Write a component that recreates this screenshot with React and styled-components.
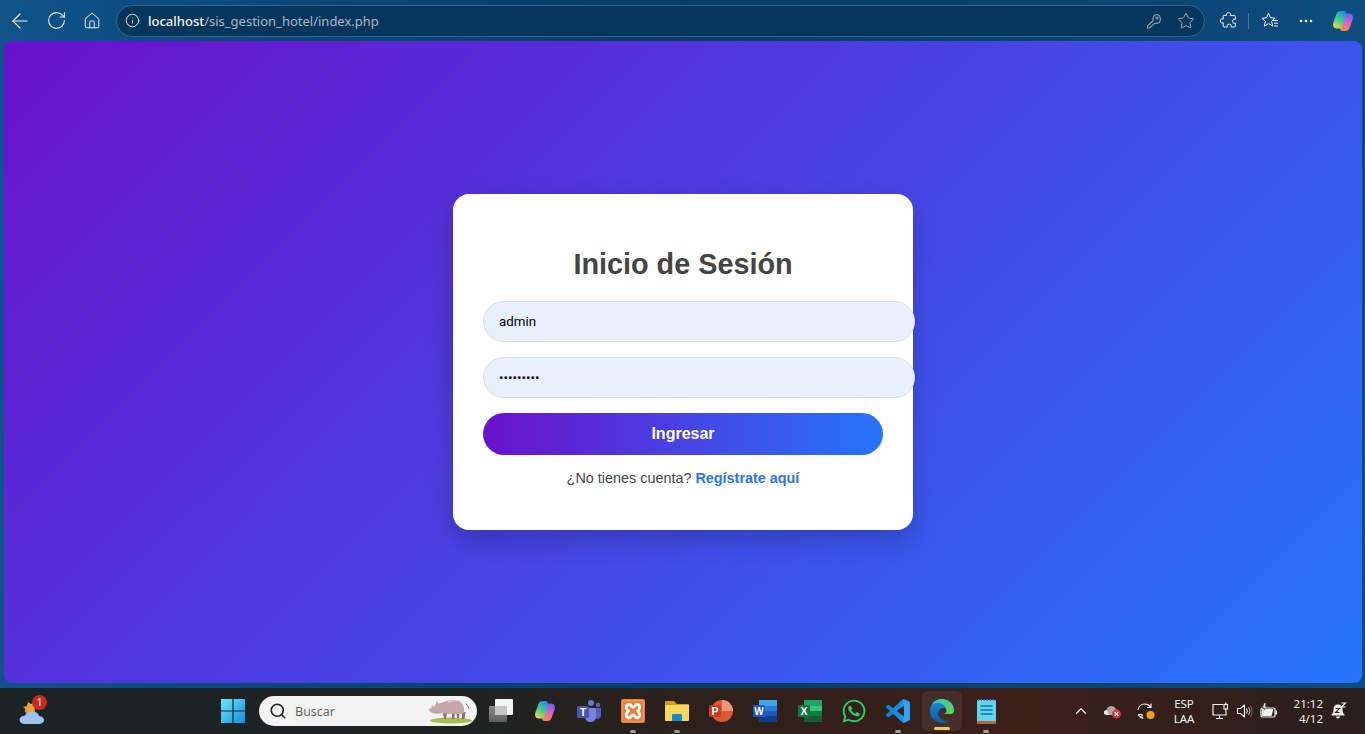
import React from "react";
import styled, { createGlobalStyle } from "styled-components";
import { ArrowLeft, RotateCw, House, Info, Star, ChevronUp, Search } from "lucide-react";
import { FaWhatsapp } from "react-icons/fa";

const GlobalStyle = createGlobalStyle`
  html, body {
    margin: 0;
    height: 100%;
    overflow: hidden;
  }
  * {
    box-sizing: content-box;
  }
`;

const Screen = styled.div`
  height: 734px;
  display: flex;
  flex-direction: column;
  background: linear-gradient(90deg, #0f5389 0%, #0a4676 25%, #063c68 50%, #0a4471 80%, #0d4d80 100%);
  font-family: "Liberation Sans", Arial, sans-serif;
`;

const Toolbar = styled.div`
  height: 41px;
  flex: none;
  display: flex;
  align-items: center;
  padding-left: 2px;
`;

const ToolButton = styled.div`
  width: ${(p) => p.$w || 36}px;
  height: 32px;
  flex: none;
  display: flex;
  align-items: center;
  justify-content: center;
  color: ${(p) => p.$color || "#eef4f8"};
`;

const AddressBar = styled.div`
  flex: none;
  width: 1085px;
  height: 30px;
  margin-left: 6px;
  margin-right: 5px;
  padding-right: 2px;
  display: flex;
  align-items: center;
  border: 1px solid #2f6690;
  border-radius: 16px;
  background: #07365c;
  color: #e8eef3;
`;

const SiteInfo = styled.div`
  width: 31px;
  flex: none;
  display: flex;
  justify-content: center;
`;

const Url = styled.div`
  flex: 1;
  font-family: "Noto Sans", sans-serif;
  font-size: 13px;
  color: #a7b9c8;
  white-space: nowrap;
`;

const Host = styled.span`
  color: #f4f7fa;
  font-weight: 500;
`;

const Divider = styled.div`
  width: 1px;
  height: 16px;
  flex: none;
  background: #4a7698;
`;

const PageFrame = styled.div`
  flex: none;
  padding: 0 3px 5px 4px;
`;

const Page = styled.main`
  height: 642px;
  border-radius: 8px;
  display: flex;
  align-items: center;
  justify-content: center;
  background: linear-gradient(135deg, #6a11cb, #2575fc);
`;

const Card = styled.div`
  width: 400px;
  padding: 50px 30px 44px;
  background: #fff;
  border-radius: 16px;
  box-shadow: 0 10px 25px rgba(0, 0, 0, 0.2);
`;

const Title = styled.h2`
  margin: 0 0 17px;
  font-size: 28.8px;
  line-height: 40px;
  font-weight: 700;
  text-align: center;
  color: #444;
`;

const Input = styled.input`
  display: block;
  width: 100%;
  height: 15px;
  padding: 12px 15px;
  margin: 0 0 15px;
  border: 1px solid #ddd;
  border-radius: 25px;
  outline: none;
  background: #e8f0fe;
  font-family: Roboto, sans-serif;
  font-size: 13.33px;
  color: #000;
`;

const SubmitButton = styled.button`
  display: block;
  width: 100%;
  height: 42px;
  padding: 0;
  border: none;
  border-radius: 25px;
  background: linear-gradient(90deg, #6a11cb, #2575fc);
  font-family: "Liberation Sans", Arial, sans-serif;
  font-size: 16px;
  font-weight: 700;
  color: #fff;
`;

const Footnote = styled.p`
  margin: 15px 0 0;
  font-size: 14.4px;
  line-height: 16px;
  text-align: center;
  color: #444;
`;

const RegisterLink = styled.a`
  font-weight: 700;
  color: #2d74e8;
  text-decoration: none;
`;

const Taskbar = styled.footer`
  height: 46px;
  flex: none;
  display: flex;
  align-items: center;
  background: linear-gradient(90deg, #1c2423 0%, #1e2322 35%, #30201a 55%, #3b2018 75%, #2f1f1a 92%, #291f1c 100%);
`;

const WeatherSlot = styled.div`
  width: 211px;
  flex: none;
  padding-left: 16px;
  box-sizing: border-box;
  display: flex;
  align-items: center;
`;

const Weather = styled.div`
  position: relative;
  width: 32px;
  height: 32px;
`;

const Badge = styled.span`
  position: absolute;
  top: 0;
  right: 1px;
  width: 15px;
  height: 15px;
  border-radius: 50%;
  background: #c42b1c;
  color: #fff;
  font-family: "Noto Sans", sans-serif;
  font-size: 10px;
  line-height: 15px;
  text-align: center;
`;

const TaskSlot = styled.div`
  position: relative;
  width: ${(p) => (p.$narrow ? 40 : 44)}px;
  height: ${(p) => (p.$narrow ? 40 : 44)}px;
  margin-left: ${(p) => (p.$narrow ? 2 : p.$nudge || 0)}px;
  margin-right: ${(p) => (p.$narrow ? 2 : 0)}px;
  flex: none;
  display: flex;
  align-items: center;
  justify-content: center;
  border-radius: 6px;
  background: ${(p) => (p.$active ? "rgba(255, 255, 255, 0.07)" : "none")};
`;

const RunDot = styled.span`
  position: absolute;
  left: 50%;
  bottom: ${(p) => (p.$active ? 1 : 0)}px;
  width: ${(p) => (p.$active ? 16 : 6)}px;
  height: 3px;
  border-radius: 2px;
  transform: translateX(-50%);
  background: ${(p) => (p.$active ? "#e6c76c" : "#9c9c9c")};
`;

const SearchBox = styled.div`
  width: 218px;
  height: 30px;
  margin: 0 2px 0 4px;
  padding: 0 3px 0 10px;
  box-sizing: border-box;
  flex: none;
  display: flex;
  align-items: center;
  gap: 8px;
  border-radius: 15px;
  background: #f3f3f3;
  color: #222;
`;

const SearchText = styled.span`
  flex: 1;
  font-family: "Noto Sans", sans-serif;
  font-size: 12.5px;
  color: #666;
`;

const Tray = styled.div`
  margin-left: auto;
  padding-right: 14px;
  display: flex;
  align-items: center;
  color: #f2f0ee;
`;

const TraySlot = styled.div`
  width: ${(p) => p.$w}px;
  margin-left: ${(p) => p.$gap || 0}px;
  flex: none;
  display: flex;
  align-items: center;
  justify-content: center;
`;

const TrayText = styled.div`
  width: ${(p) => p.$w}px;
  flex: none;
  font-family: "Noto Sans", sans-serif;
  font-size: 11.5px;
  line-height: 15.5px;
  text-align: ${(p) => p.$align || "center"};
  color: #f2f0ee;
`;

const CopilotIcon = ({ size, id }) => (
  <svg width={size} height={size} viewBox="0 0 24 24">
    <defs>
      <linearGradient id={`${id}-a`} x1="0.7" y1="0" x2="0.2" y2="1">
        <stop offset="0" stopColor="#1e8fe8" />
        <stop offset="0.5" stopColor="#3fd08a" />
        <stop offset="1" stopColor="#f7d43c" />
      </linearGradient>
      <linearGradient id={`${id}-b`} x1="0.6" y1="0" x2="0.4" y2="1">
        <stop offset="0" stopColor="#6f5cf0" />
        <stop offset="0.55" stopColor="#e85fc4" />
        <stop offset="1" stopColor="#f98a3a" />
      </linearGradient>
    </defs>
    <path d="M14.500 22c2 0 3.300-1 4-3l3.100-8.500c1.100-3.200-.4-6-3.200-6h-2.600c-1.800 0-2.800 1-3.400 2.700L9 18c-.6 2 .4 4 2.600 4z" fill={`url(#${id}-b)`} />
    <path d="M9.500 2C7.500 2 6.200 3 5.500 5L2.400 13.500c-1.100 3.200.4 6 3.200 6h2.600c1.800 0 2.800-1 3.400-2.700L15 6c.6-2-.4-4-2.600-4z" fill={`url(#${id}-a)`} />
  </svg>
);

const KeyIcon = () => (
  <svg width="16" height="16" viewBox="0 0 16 16" fill="none" stroke="#8aa3b7" strokeWidth="1.100" strokeLinejoin="round">
    <path d="M10 1.500a4.500 4.500 0 0 1 1.500 8.700c-1 .3-1.800.2-2.500-.1L3.300 15H1.500v-2l5.700-5.500c-.4-1-.4-2 .1-3A4.500 4.500 0 0 1 10 1.500z" />
    <circle cx="11" cy="5" r="1" />
  </svg>
);

const PuzzleIcon = () => (
  <svg width="20" height="20" viewBox="0 0 20 20" fill="none" stroke="#eef4f8" strokeWidth="1" strokeLinejoin="round">
    <path d="M7.500 3.200c0-2 4.200-2 4.200 0 0 .6-.3 1-.3 1.400h4.200a.8.8 0 0 1 .8.800v3c-.5 0-.9-.3-1.500-.3-1.800 0-1.800 4.200 0 4.200.6 0 1-.3 1.500-.3v3.200a.8.8 0 0 1-.8.800h-3.600c0-.5.3-.9.3-1.400 0-1.900-4.200-1.900-4.200 0 0 .5.3.9.3 1.400H5a.8.8 0 0 1-.8-.8v-3.500c-.5 0-.9.3-1.400.3-1.900 0-1.900-4.200 0-4.200.5 0 .9.3 1.400.3v-3a.8.8 0 0 1 .8-.8h3c0-.4-.5-.8-.5-1.400z" />
  </svg>
);

const FavoritesIcon = () => (
  <svg width="20" height="20" viewBox="0 0 20 20" fill="none" stroke="#eef4f8" strokeWidth="1" strokeLinejoin="round">
    <path d="M8.500 2.200l2 4.600 4.600.4-3.500 3.100 1 4.800-4.100-2.500-4.200 2.500 1.100-4.800L2 7.200l4.600-.4z" />
    <path d="M13 9.500h5M14 12.200h4M14 15h4" />
  </svg>
);

const DotsIcon = () => (
  <svg width="14" height="4" viewBox="0 0 14 4" fill="#eef4f8">
    <circle cx="2" cy="2" r="1.300" />
    <circle cx="7" cy="2" r="1.300" />
    <circle cx="12" cy="2" r="1.300" />
  </svg>
);

const WeatherIcon = () => (
  <svg width="32" height="32" viewBox="0 0 32 32">
    <path d="M9 17l1-3-3-2 4-1 1-4 3 2 3-1-1 10z" fill="#f2a93b" />
    <circle cx="14" cy="15" r="5" fill="#e8a23a" />
    <path d="M9 29c-3.500 0-5.500-1.800-5.500-4.200S6 20.500 8.800 20.800C10 18 12.800 16.500 16 16.500c3.800 0 6.600 2 7.200 4.700 2.500-.3 4.800 1.300 4.800 3.600S26 29 23.500 29z" fill="#9ec3ee" />
  </svg>
);

const WindowsIcon = () => (
  <svg width="24" height="24" viewBox="0 0 24 24">
    <defs>
      <linearGradient id="win" x1="0" y1="0" x2="1" y2="1">
        <stop offset="0" stopColor="#6fe3fb" />
        <stop offset="1" stopColor="#0f8fe6" />
      </linearGradient>
    </defs>
    <path d="M0 0h11.400v11.400H0zM12.600 0H24v11.400H12.600zM0 12.600h11.400V24H0zM12.600 12.600H24V24H12.600z" fill="url(#win)" />
  </svg>
);

const RhinoIcon = () => (
  <svg width="46" height="26" viewBox="0 0 46 26">
    <ellipse cx="23" cy="22.500" rx="21" ry="3" fill="#a9bb56" />
    <path d="M24 21h2l1-6h-3zM34 21h2.500l1-7h-4zM16 21h2l1-6h-4zM29 20h2l.5-5h-3z" fill="#8b7273" />
    <path d="M1 11l2.500-1 .5-3 1.500 2 2.500-3 .5-3 2 2.500c3-.5 5-1.500 8-2.500 5-1.500 11-1.500 14 1 3 2.500 4 6 3.500 10l-1 2H18l-4-1c-3 1-6.500 1-9.500 0C2.500 14.500 1 13 1 11z" fill="#c4a6a6" />
    <path d="M20 3c4.500-1.500 10-1.500 13.500.500-4-.5-9-.5-13.500 1.500z" fill="#e0cdcb" />
    <path d="M38 6c1.500 1 2.500 3 3 5" stroke="#6b5a55" strokeWidth="0.800" fill="none" />
  </svg>
);

const TaskViewIcon = () => (
  <svg width="24" height="24" viewBox="0 0 24 24">
    <defs>
      <linearGradient id="task-view" x1="0" y1="0" x2="0" y2="1">
        <stop offset="0" stopColor="#8a8a8a" />
        <stop offset="1" stopColor="#5e5e5e" />
      </linearGradient>
    </defs>
    <rect x="6" y="0" width="18" height="16" rx="1" fill="#f4f4f4" />
    <rect x="0" y="7" width="18" height="16" rx="1" fill="url(#task-view)" />
    <rect x="6" y="7" width="12" height="9" fill="#c4c4c4" />
  </svg>
);

const TeamsIcon = () => (
  <svg width="24" height="24" viewBox="0 0 24 24">
    <circle cx="14" cy="4" r="3" fill="#6f73c8" />
    <circle cx="21" cy="6" r="2.300" fill="#5a5fb5" />
    <path d="M16 9h8v7c0 2.500-2 4-4 4s-4-1.500-4-4z" fill="#5a5fb5" />
    <path d="M8 9h11v9c0 3-2.500 5-5.500 5S8 21 8 18z" fill="#7b80d8" />
    <rect x="0" y="7" width="12" height="12" rx="1.500" fill="#4d52ac" />
    <text x="6" y="16.500" fontFamily="Liberation Sans, sans-serif" fontSize="10" fontWeight="700" fill="#fff" textAnchor="middle">T</text>
  </svg>
);

const XamppIcon = () => (
  <svg width="24" height="24" viewBox="0 0 24 24">
    <rect width="24" height="24" rx="2" fill="#e8803a" />
    <rect x="1.500" y="1.500" width="21" height="21" rx="1" fill="none" stroke="#f3a56d" strokeWidth="0.800" />
    <path d="M7 5.500c2.500-1.500 3 2.500 5 2.500s2.500-4 5-2.500c3 1.500 1.500 5-.5 6.500 2 1.500 3.500 5 .5 6.500-2.500 1.500-3-2.500-5-2.500s-2.500 4-5 2.500c-3-1.500-1.500-5 .5-6.500C5.500 10.500 4 7 7 5.500z" fill="none" stroke="#fff" strokeWidth="2.800" strokeLinejoin="round" />
  </svg>
);

const FolderIcon = () => (
  <svg width="24" height="24" viewBox="0 0 24 24">
    <path d="M0 3a1 1 0 0 1 1-1h8l3 3h11a1 1 0 0 1 1 1v4H0z" fill="#d69c14" />
    <path d="M0 6h24v15a1 1 0 0 1-1 1H1a1 1 0 0 1-1-1z" fill="#fbd75f" />
    <path d="M7 16a1 1 0 0 1 1-1h8a1 1 0 0 1 1 1v6H7z" fill="#1b86c8" />
  </svg>
);

const PowerpointIcon = () => (
  <svg width="24" height="24" viewBox="0 0 24 24">
    <circle cx="13" cy="12" r="11" fill="#dd5a36" />
    <path d="M13 1a11 11 0 0 1 11 11H13z" fill="#f0937a" />
    <rect x="0" y="6" width="12" height="12" rx="1.500" fill="#c23b1e" />
    <text x="6" y="15.800" fontFamily="Liberation Sans, sans-serif" fontSize="10.500" fontWeight="700" fill="#fff" textAnchor="middle">P</text>
  </svg>
);

const WordIcon = () => (
  <svg width="24" height="24" viewBox="0 0 24 24">
    <rect x="6" y="1" width="18" height="6" fill="#41a5ee" />
    <rect x="6" y="7" width="18" height="5" fill="#2b7cd3" />
    <rect x="6" y="12" width="18" height="5" fill="#185abd" />
    <rect x="6" y="17" width="18" height="6" fill="#103f91" />
    <rect x="0" y="6" width="12" height="12" rx="1" fill="#1b5bb8" />
    <text x="6" y="15.800" fontFamily="Liberation Sans, sans-serif" fontSize="10" fontWeight="700" fill="#fff" textAnchor="middle">W</text>
  </svg>
);

const ExcelIcon = () => (
  <svg width="24" height="24" viewBox="0 0 24 24">
    <rect x="6" y="1" width="18" height="6" fill="#21a366" />
    <rect x="6" y="7" width="18" height="5" fill="#33c481" />
    <rect x="6" y="12" width="18" height="5" fill="#107c41" />
    <rect x="6" y="17" width="18" height="6" fill="#185c37" />
    <rect x="0" y="6" width="12" height="12" rx="1" fill="#117544" />
    <text x="6" y="15.800" fontFamily="Liberation Sans, sans-serif" fontSize="10.500" fontWeight="700" fill="#fff" textAnchor="middle">X</text>
  </svg>
);

const VscodeIcon = () => (
  <svg width="24" height="24" viewBox="0 0 24 24">
    <defs>
      <linearGradient id="vscode" x1="0" y1="0" x2="1" y2="0">
        <stop offset="0" stopColor="#0f7fd0" />
        <stop offset="0.7" stopColor="#1a90e4" />
        <stop offset="0.75" stopColor="#2aa6f5" />
        <stop offset="1" stopColor="#2aa6f5" />
      </linearGradient>
    </defs>
    <path d="M23.150 2.587L18.210.21a1.494 1.494 0 0 0-1.705.29l-9.460 8.630-4.120-3.128a.999.999 0 0 0-1.276.057L.327 7.261A1 1 0 0 0 .326 8.740L3.899 12 .326 15.260a1 1 0 0 0 .001 1.479L1.650 17.940a.999.999 0 0 0 1.276.057l4.120-3.128 9.460 8.630a1.492 1.492 0 0 0 1.704.29l4.942-2.377A1.500 1.500 0 0 0 24 20.060V3.939a1.500 1.500 0 0 0-.850-1.352zm-5.146 14.861L10.826 12l7.178-5.448v10.896z" fill="url(#vscode)" />
  </svg>
);

const EdgeIcon = () => (
  <svg width="26" height="26" viewBox="0 0 26 26">
    <defs>
      <linearGradient id="edge-a" x1="0" y1="0" x2="1" y2="1">
        <stop offset="0" stopColor="#30c6c0" />
        <stop offset="1" stopColor="#5fd84f" />
      </linearGradient>
      <linearGradient id="edge-b" x1="0" y1="0" x2="0" y2="1">
        <stop offset="0" stopColor="#1b8ce0" />
        <stop offset="1" stopColor="#0c59a4" />
      </linearGradient>
    </defs>
    <path d="M13 1C6.400 1 1 6.400 1 13c0 6.800 5.500 12 12 12 2.700 0 5.300-.9 7.400-2.500-4.400 1.200-9.400-.6-10.900-4.900-1.200-3.500.9-7 4.500-7.600 3-.5 5 .8 5.600 3H25C25 6 19.600 1 13 1z" fill="url(#edge-b)" />
    <path d="M13 1C8.500 1 4.500 3.500 2.500 7.200 5 4.500 9 4 12.200 5.400c3.200 1.400 5 3.800 5.400 7.600.2 1.500-1.500 3-3.500 3h7c2.300 0 3.900-1.300 3.900-3.600C25 6 19.600 1 13 1z" fill="url(#edge-a)" />
  </svg>
);

const NotepadIcon = () => (
  <svg width="19" height="25" viewBox="0 0 19 25">
    <rect x="0" y="1" width="19" height="23" rx="1" fill="#66d3ec" />
    <path d="M1.500 2V0M4.500 2V0M7.500 2V0M10.500 2V0M13.500 2V0M16.500 2V0" stroke="#1f8fb5" strokeWidth="1.300" />
    <rect x="0" y="22" width="19" height="3" fill="#b5683a" />
    <path d="M3.500 7h12M3.500 11h12M3.500 15h12" stroke="#1a8fb5" strokeWidth="2" />
  </svg>
);

const CloudAlertIcon = () => (
  <svg width="18" height="16" viewBox="0 0 18 16">
    <path d="M3 12c-2 0-3-1-3-2.500S1.500 7 2.500 7C3 4.500 5 3 7.500 3c2.200 0 4 1.500 4.500 3.500 1 0 2 .5 2.500 1.500V12z" fill="#a9a6a4" />
    <path d="M3 12c-2 0-3-1-3-2.500S1.500 7 2.500 7L6 12z" fill="#e9e7e5" />
    <circle cx="12.500" cy="11" r="4.500" fill="#d8343f" />
    <path d="M10.700 9.200l3.600 3.600M14.300 9.200l-3.600 3.600" stroke="#fff" strokeWidth="1.200" />
  </svg>
);

const SyncIcon = () => (
  <svg width="20" height="20" viewBox="0 0 20 20" fill="none" stroke="#f2f0ee" strokeWidth="1.200">
    <path d="M2 9c.3-3.700 3.300-6 6.800-6 2.400 0 4.400 1 5.700 3" />
    <path d="M15 2.500V6.500h-4" />
    <path d="M2 13.500h4v4M2.300 14c1.200 1.800 2.800 3 5 3.300" />
    <circle cx="14.500" cy="14" r="4" fill="#f59c1a" stroke="none" />
  </svg>
);

const MonitorIcon = () => (
  <svg width="18" height="18" viewBox="0 0 18 18" fill="none" stroke="#f2f0ee" strokeWidth="1.200">
    <path d="M11 2.500H1v10.500h13V9" />
    <path d="M7.500 13v3M4 16.500h7" />
    <rect x="12" y="2.500" width="3.500" height="4.500" />
    <path d="M13.800 .5v2M13.800 7v2" />
  </svg>
);

const SpeakerIcon = () => (
  <svg width="18" height="18" viewBox="0 0 18 18" fill="none" stroke="#f2f0ee" strokeWidth="1.100">
    <path d="M1.500 6.500h3L8.500 3v12l-4-3.500h-3z" strokeLinejoin="round" />
    <path d="M10.500 6.500c1 1.500 1 3.500 0 5" />
    <path d="M12.500 5c1.600 2.500 1.600 5.500 0 8" stroke="#b5b0ad" />
    <path d="M14.500 3.500c2 3.300 2 7.700 0 11" stroke="#6e6763" />
  </svg>
);

const BatteryIcon = () => (
  <svg width="18" height="18" viewBox="0 0 18 18">
    <rect x="1" y="6" width="14" height="9" rx="1.500" fill="none" stroke="#f2f0ee" strokeWidth="1.200" />
    <path d="M2 7h11.500l-2 7H2z" fill="#f2f0ee" />
    <rect x="15.500" y="8.500" width="1.500" height="4" fill="#f2f0ee" />
    <path d="M4 1L2.500 6h2.200L3.800 8.500 7.500 4.500H5.200L6.200 1z" fill="#f2f0ee" stroke="#2f201a" strokeWidth="0.500" />
  </svg>
);

const BellIcon = () => (
  <svg width="18" height="18" viewBox="0 0 18 18">
    <path d="M8 2.500c3 0 4.500 2 4.500 4.500 0 3 .5 4 2 5.500v1H1.500v-1c1.500-1.500 2-2.500 2-5.500C3.500 4.500 5 2.500 8 2.500z" fill="#f2f0ee" />
    <path d="M6 14.500c0 2.500 4 2.500 4 0z" fill="#f2f0ee" />
    <path d="M5.500 6.500h4l-4 4h4" fill="none" stroke="#2f201a" strokeWidth="1.100" />
    <path d="M11.500 1h4l-4 4h4" fill="none" stroke="#f2f0ee" strokeWidth="1.100" />
  </svg>
);

const App = () => {
  return (
    <Screen>
      <GlobalStyle />
      <Toolbar>
        <ToolButton><ArrowLeft size={24} strokeWidth={1.1} /></ToolButton>
        <ToolButton><RotateCw size={21} strokeWidth={1.2} /></ToolButton>
        <ToolButton><House size={18} strokeWidth={1.3} /></ToolButton>
        <AddressBar>
          <SiteInfo><Info size={15} strokeWidth={1.5} /></SiteInfo>
          <Url><Host>localhost</Host>/sis_gestion_hotel/index.php</Url>
          <ToolButton $w={32}><KeyIcon /></ToolButton>
          <ToolButton $w={32} $color="#a9bccb"><Star size={18} strokeWidth={1.2} /></ToolButton>
        </AddressBar>
        <ToolButton $w={38}><PuzzleIcon /></ToolButton>
        <Divider />
        <ToolButton $w={42}><FavoritesIcon /></ToolButton>
        <ToolButton $w={30}><DotsIcon /></ToolButton>
        <ToolButton $w={44}><CopilotIcon size={24} id="copilot-top" /></ToolButton>
      </Toolbar>

      <PageFrame>
        <Page>
          <Card>
            <Title>Inicio de Sesión</Title>
            <form>
              <Input type="text" defaultValue="admin" />
              <Input type="password" defaultValue="123456789" />
              <SubmitButton type="button">Ingresar</SubmitButton>
            </form>
            <Footnote>
              ¿No tienes cuenta? <RegisterLink href="#">Regístrate aquí</RegisterLink>
            </Footnote>
          </Card>
        </Page>
      </PageFrame>

      <Taskbar>
        <WeatherSlot>
          <Weather>
            <WeatherIcon />
            <Badge>1</Badge>
          </Weather>
        </WeatherSlot>
        <TaskSlot><WindowsIcon /></TaskSlot>
        <SearchBox>
          <Search size={18} strokeWidth={2.2} />
          <SearchText>Buscar</SearchText>
          <RhinoIcon />
        </SearchBox>
        <TaskSlot><TaskViewIcon /></TaskSlot>
        <TaskSlot><CopilotIcon size={24} id="copilot-bar" /></TaskSlot>
        <TaskSlot><TeamsIcon /></TaskSlot>
        <TaskSlot><XamppIcon /><RunDot /></TaskSlot>
        <TaskSlot><FolderIcon /><RunDot /></TaskSlot>
        <TaskSlot><PowerpointIcon /></TaskSlot>
        <TaskSlot><WordIcon /></TaskSlot>
        <TaskSlot $nudge={1}><ExcelIcon /></TaskSlot>
        <TaskSlot><FaWhatsapp size={26} color="#25d366" /></TaskSlot>
        <TaskSlot><VscodeIcon /><RunDot /></TaskSlot>
        <TaskSlot $narrow $active><EdgeIcon /><RunDot $active /></TaskSlot>
        <TaskSlot><NotepadIcon /><RunDot /></TaskSlot>
        <Tray>
          <TraySlot $w={32}><ChevronUp size={18} strokeWidth={1.6} /></TraySlot>
          <TraySlot $w={32}><CloudAlertIcon /></TraySlot>
          <TraySlot $w={34}><SyncIcon /></TraySlot>
          <TrayText $w={42}>ESP<br />LAA</TrayText>
          <TraySlot $w={24} $gap={4}><MonitorIcon /></TraySlot>
          <TraySlot $w={24}><SpeakerIcon /></TraySlot>
          <TraySlot $w={24}><BatteryIcon /></TraySlot>
          <TrayText $w={42} $align="right">21:12<br />4/12</TrayText>
          <TraySlot $w={24} $gap={4}><BellIcon /></TraySlot>
        </Tray>
      </Taskbar>
    </Screen>
  );
};

export default App;
